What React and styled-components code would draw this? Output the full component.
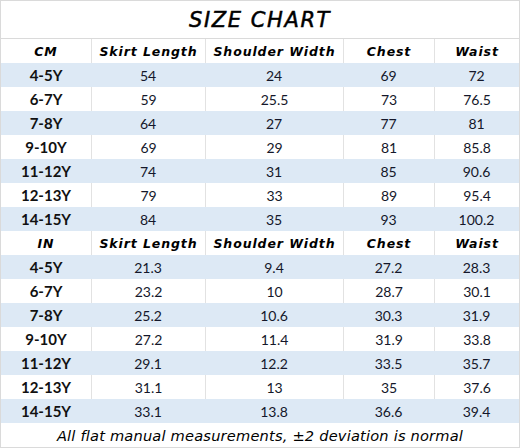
import styled, { createGlobalStyle } from "styled-components";

const GlobalStyle = createGlobalStyle`
	html, body {
		margin: 0;
		padding: 0;
		background: #ffffff;
	}
`;

const hand = `"DejaVu Sans", "Noto Sans", sans-serif`;
const plain = `"Lato", "Open Sans", sans-serif`;

const Frame = styled.div`
	width: 520px;
	height: 448px;
	box-sizing: border-box;
	border: 1px solid #dadada;
	display: flex;
	flex-direction: column;
	background: #ffffff;
	color: #111111;
`;

const Title = styled.div`
	height: 36px;
	border-bottom: 1px solid #dadada;
	display: flex;
	align-items: center;
	justify-content: center;
	font-family: ${hand};
	font-style: italic;
	font-size: 21px;
	letter-spacing: 1.6px;
	padding-top: 1px;
	color: #000000;
	-webkit-text-stroke: 0.5px #000000;
`;

const Row = styled.div`
	display: grid;
	grid-template-columns: 90px 114px 138px 91px 1fr;
	height: 24px;
	background: ${(p) => (p.$shade ? "#dde9f5" : "#ffffff")};
`;

const Cell = styled.div`
	box-sizing: border-box;
	display: flex;
	align-items: center;
	justify-content: center;
	border-left: ${(p) => (p.$first || p.$shade ? "none" : "1px solid #e2e2e2")};
	font-family: ${plain};
	font-size: 14px;
	color: #14172a;
`;

const HeadCell = styled(Cell)`
	font-family: ${hand};
	font-style: italic;
	font-weight: bold;
	font-size: 12.5px;
	letter-spacing: 0.9px;
	color: #000000;
`;

const SizeCell = styled(Cell)`
	font-weight: bold;
	font-size: 15px;
	color: #111111;
`;

const Footer = styled.div`
	flex: 1;
	display: flex;
	align-items: center;
	justify-content: center;
	font-family: ${hand};
	font-style: italic;
	font-size: 14.6px;
	letter-spacing: 0.2px;
	color: #000000;
`;

const headers = ["Skirt Length", "Shoulder Width", "Chest", "Waist"];

const tables = [
	{
		unit: "CM",
		rows: [
			["4-5Y", "54", "24", "69", "72"],
			["6-7Y", "59", "25.5", "73", "76.5"],
			["7-8Y", "64", "27", "77", "81"],
			["9-10Y", "69", "29", "81", "85.8"],
			["11-12Y", "74", "31", "85", "90.6"],
			["12-13Y", "79", "33", "89", "95.4"],
			["14-15Y", "84", "35", "93", "100.2"],
		],
	},
	{
		unit: "IN",
		rows: [
			["4-5Y", "21.3", "9.4", "27.2", "28.3"],
			["6-7Y", "23.2", "10", "28.7", "30.1"],
			["7-8Y", "25.2", "10.6", "30.3", "31.9"],
			["9-10Y", "27.2", "11.4", "31.9", "33.8"],
			["11-12Y", "29.1", "12.2", "33.5", "35.7"],
			["12-13Y", "31.1", "13", "35", "37.6"],
			["14-15Y", "33.1", "13.8", "36.6", "39.4"],
		],
	},
];

export default function App() {
	return (
		<>
			<GlobalStyle />
			<Frame>
				<Title>SIZE CHART</Title>
				{tables.map((t) => (
					<div key={t.unit}>
						<Row>
							<HeadCell $first>{t.unit}</HeadCell>
							{headers.map((h) => (
								<HeadCell key={h}>{h}</HeadCell>
							))}
						</Row>
						{t.rows.map((r, i) => {
							const shade = i % 2 === 0;
							return (
								<Row key={r[0]} $shade={shade}>
									<SizeCell $first>{r[0]}</SizeCell>
									{r.slice(1).map((v, j) => (
										<Cell key={j} $shade={shade}>
											{v}
										</Cell>
									))}
								</Row>
							);
						})}
					</div>
				))}
				<Footer>All flat manual measurements, ±2 deviation is normal</Footer>
			</Frame>
		</>
	);
}
